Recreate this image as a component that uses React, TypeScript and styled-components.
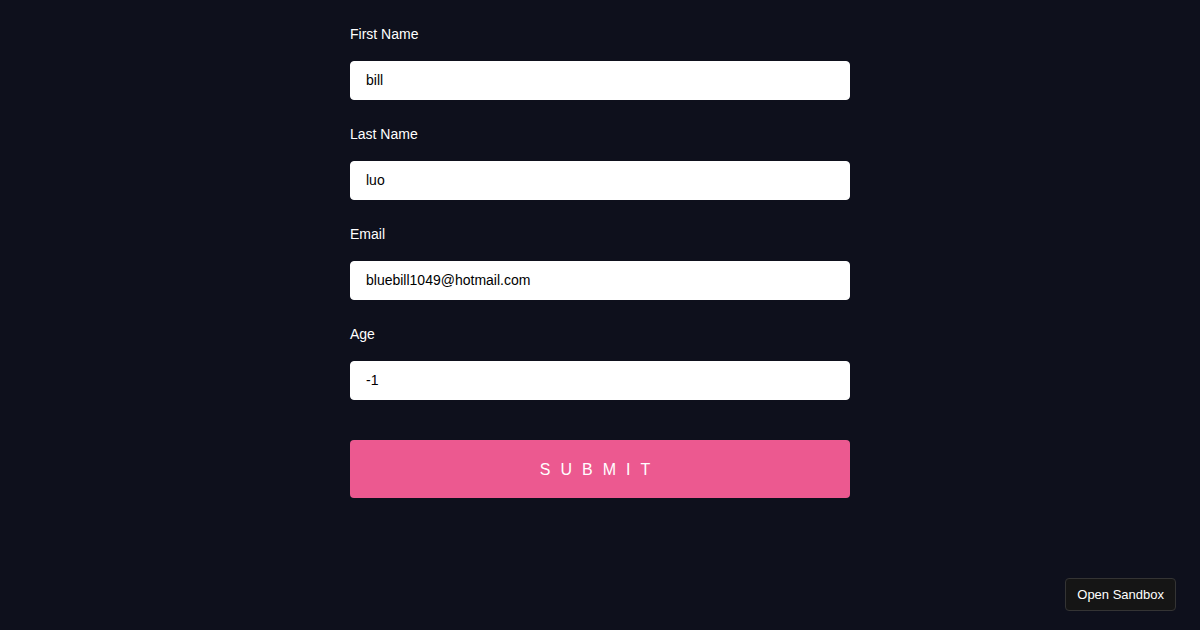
import styled, { createGlobalStyle } from 'styled-components';

const GlobalStyle = createGlobalStyle`
  html, body {
    margin: 0;
    padding: 0;
    background: #0e101c;
    font-family: "Liberation Sans", Arial, sans-serif;
  }
`;

const Page = styled.div`
  min-height: 630px;
  padding-top: 20px;
  box-sizing: border-box;
`;

const Form = styled.form`
  max-width: 500px;
  margin: 0 auto;
  display: flex;
  flex-direction: column;
`;

const Field = styled.div`
  display: flex;
  flex-direction: column;
  & + & {
    margin-top: 20px;
  }
`;

const Label = styled.label`
  display: block;
  line-height: 28px;
  margin-bottom: 13px;
  color: #fff;
  font-size: 14px;
  font-weight: 200;
`;

const Input = styled.input`
  display: block;
  box-sizing: border-box;
  width: 100%;
  height: 39px;
  border-radius: 4px;
  border: 1px solid #fff;
  padding: 9px 15px 11px;
  font-family: inherit;
  font-size: 14px;
  color: #000;
  background: #fff;
  outline: none;
`;

const Submit = styled.button`
  margin-top: 40px;
  height: 58px;
  padding: 2px 0 0;
  border: none;
  border-radius: 4px;
  background: #ec5990;
  color: #fff;
  font-family: inherit;
  font-size: 16px;
  font-weight: 100;
  letter-spacing: 10px;
  text-transform: uppercase;
  cursor: pointer;
`;

const SandboxButton = styled.a`
  position: fixed;
  right: 24px;
  bottom: 19px;
  height: 33px;
  padding: 0 11px;
  display: flex;
  align-items: center;
  box-sizing: border-box;
  background: #151515;
  border: 1px solid #343434;
  border-radius: 4px;
  color: #fff;
  font-size: 13px;
  text-decoration: none;
`;

const fields = [
  { id: 'firstName', label: 'First Name', value: 'bill', type: 'text' },
  { id: 'lastName', label: 'Last Name', value: 'luo', type: 'text' },
  { id: 'email', label: 'Email', value: 'bluebill1049@hotmail.com', type: 'email' },
  { id: 'age', label: 'Age', value: '-1', type: 'text' },
];

export default function App() {
  return (
    <Page>
      <GlobalStyle />
      <Form onSubmit={(e) => e.preventDefault()}>
        {fields.map((f) => (
          <Field key={f.id}>
            <Label htmlFor={f.id}>{f.label}</Label>
            <Input id={f.id} type={f.type} defaultValue={f.value} />
          </Field>
        ))}
        <Submit type="submit">Submit</Submit>
      </Form>
      <SandboxButton href="#">Open Sandbox</SandboxButton>
    </Page>
  );
}
